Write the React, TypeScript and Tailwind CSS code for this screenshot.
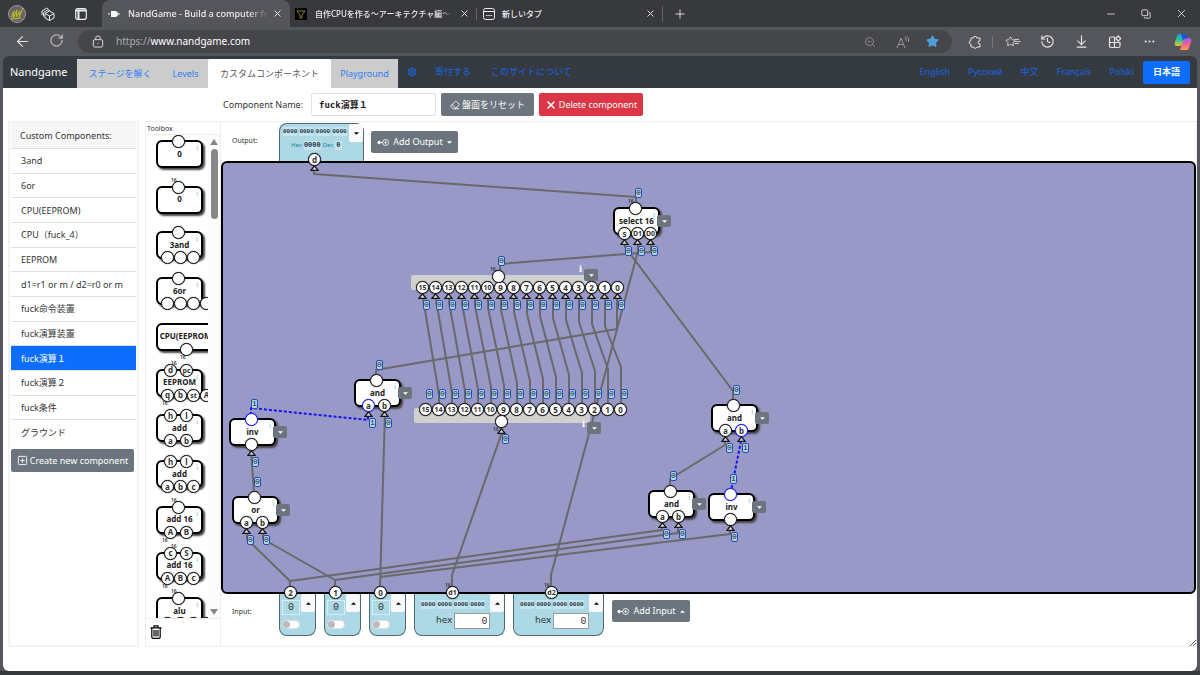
import type { ReactNode } from "react";
import clsx from "clsx";
import {
  ArrowDownToLine,
  ArrowLeft,
  Copy,
  Eraser,
  History,
  ListMinus,
  Minus,
  MoreHorizontal,
  PanelTop,
  Plus,
  RotateCw,
  Settings,
  SquarePlus,
  Star,
  X,
  ZoomOut,
} from "lucide-react";

type Point = [number, number];

type PortDef = { label?: string; live?: boolean };

type PartDef = {
  name: string;
  outputs?: PortDef[];
  inputs: PortDef[];
  wide?: boolean;
  bus?: boolean;
};

type NodeDef = PartDef & { id: string; x: number; y: number };

const blank: PortDef = {};

const components = [
  "3and",
  "6or",
  "CPU(EEPROM)",
  "CPU（fuck_4）",
  "EEPROM",
  "d1=r1 or m / d2=r0 or m",
  "fuck命令装置",
  "fuck演算装置",
  "fuck演算１",
  "fuck演算２",
  "fuck条件",
  "グラウンド",
];

const tools: PartDef[] = [
  { name: "0", inputs: [] },
  { name: "0", inputs: [], bus: true },
  { name: "3and", inputs: [blank, blank, blank] },
  { name: "6or", inputs: [blank, blank, blank, blank] },
  { name: "CPU(EEPROM)", outputs: [], inputs: [blank], wide: true },
  {
    name: "EEPROM",
    outputs: [{ label: "d" }, { label: "pc" }],
    inputs: [{ label: "q" }, { label: "b" }, { label: "st" }, { label: "A" }],
    bus: true,
  },
  { name: "add", outputs: [{ label: "h" }, { label: "l" }], inputs: [{ label: "a" }, { label: "b" }] },
  {
    name: "add",
    outputs: [{ label: "h" }, { label: "l" }],
    inputs: [{ label: "a" }, { label: "b" }, { label: "c" }],
  },
  { name: "add 16", inputs: [{ label: "A" }, { label: "B" }], bus: true },
  {
    name: "add 16",
    outputs: [{ label: "c" }, { label: "S" }],
    inputs: [{ label: "A" }, { label: "B" }, { label: "c" }],
    bus: true,
  },
  { name: "alu", inputs: [blank, blank, blank, blank], bus: true },
];

const nodes: NodeDef[] = [
  { id: "select", name: "select 16", x: 390, y: 44, inputs: [{ label: "s" }, { label: "D1" }, { label: "D0" }], bus: true },
  { id: "and1", name: "and", x: 131, y: 216, inputs: [{ label: "a", live: true }, { label: "b" }] },
  { id: "inv1", name: "inv", x: 6, y: 255, outputs: [{ live: true }], inputs: [blank] },
  { id: "or", name: "or", x: 9, y: 333, inputs: [{ label: "a" }, { label: "b" }] },
  { id: "and2", name: "and", x: 488, y: 241, inputs: [{ label: "a" }, { label: "b", live: true }] },
  { id: "and3", name: "and", x: 425, y: 327, inputs: [{ label: "a" }, { label: "b" }] },
  { id: "inv2", name: "inv", x: 485, y: 330, outputs: [{ live: true }], inputs: [blank] },
];

const wires: Point[][] = [
  [[91, 4], [91, 11], [413, 34], [413, 42]],
  [[402, 78], [402, 84], [510, 228], [510, 238]],
  [[415, 78], [415, 88], [328, 412], [328, 424]],
  [[428, 78], [428, 89], [277, 101], [277, 108]],
  [[394, 134], [394, 166], [153, 207], [153, 213]],
  [[278, 264], [278, 272], [229, 412], [229, 424]],
  [[162, 248], [157, 424]],
  [[28, 288], [31, 330]],
  [[24, 370], [24, 376], [67, 418], [67, 424]],
  [[40, 370], [40, 376], [112, 417], [112, 424]],
  [[67, 418], [439, 367], [439, 360]],
  [[112, 417], [455, 370], [455, 360]],
  [[157, 414], [507, 371], [507, 364]],
  [[502, 276], [502, 282], [447, 316], [447, 324]],
];

// each bit of the lower splitter feeds the next higher bit of the upper one
const shiftWires: Point[][] = Array.from({ length: 15 }, (_, i) => [
  [200 + i * 13, 132],
  [200 + i * 13, 135 + i * 2],
  [216 + i * 13, 232 - i * 2],
  [216 + i * 13, 244],
]);

const liveWires: Point[][] = [
  [[28, 252], [28, 245], [145, 257], [145, 250]],
  [[518, 278], [508, 328]],
];

const toPoints = (wire: Point[]) => wire.map((p) => p.join(",")).join(" ");

function Caret({ up = false }: { up?: boolean }) {
  return (
    <svg viewBox="0 0 6 3" className={clsx("h-[3px] w-[5px] fill-current", up && "rotate-180")}>
      <path d="M0 0h6L3 3z" />
    </svg>
  );
}

function Pin() {
  return (
    <svg viewBox="0 0 14 10" className="h-[9px] w-3 fill-none stroke-current">
      <circle cx="2.500" cy="5" r="1.500" fill="currentColor" />
      <path d="M4 5h3M8.500 5h3M10 3v4" />
      <circle cx="10" cy="5" r="3.500" />
    </svg>
  );
}

function Port({ label, live, x, y }: PortDef & { x: number; y: number }) {
  return (
    <span
      style={{ left: x, top: y }}
      className={clsx(
        "absolute z-10 flex size-[13px] items-center justify-center rounded-full border bg-white leading-none font-bold",
        label && label.length > 1 ? "text-[7px]" : "text-[8px]",
        live ? "border-[#1414f0] shadow-[0_0_1px_#1414f0]" : "border-[#161616] shadow-[0_0_1px_#000]",
      )}
    >
      {label}
    </span>
  );
}

function Arrow({ x, y }: { x: number; y: number }) {
  return (
    <svg viewBox="0 0 9 6" style={{ left: x, top: y }} className="absolute z-10 h-1.5 w-[9px]">
      <path d="M4.500 .8 8 5.300H1z" fill="#ddd" stroke="#161616" strokeWidth="1.300" />
    </svg>
  );
}

function Value({ x, y, children }: { x: number; y: number; children: ReactNode }) {
  return (
    <span
      style={{ left: x, top: y }}
      className="absolute z-10 flex h-[10px] w-[7px] items-center justify-center rounded-xs border border-[#2a48b4] bg-[#add8e6] font-['Liberation_Mono'] text-[8px] leading-none text-[#123]"
    >
      {children}
    </span>
  );
}

function BusWidth({ x, y }: { x: number; y: number }) {
  return (
    <span style={{ left: x, top: y }} className="absolute text-[5px] leading-none font-semibold text-[#333]">
      16
    </span>
  );
}

function NodeMenu({ x, y }: { x: number; y: number }) {
  return (
    <button
      aria-label="Component menu"
      style={{ left: x, top: y }}
      className="absolute z-10 flex h-3 w-[14px] items-center justify-center rounded-xs bg-[#6c757d] text-white"
    >
      <Caret />
    </button>
  );
}

const portX = (count: number, i: number) => {
  if (count === 1) return 16;
  if (count === 2) return 8 + i * 16;
  return 5 + i * 13;
};

function Part({ part, placed = false }: { part: PartDef; placed?: boolean }) {
  const outputs = part.outputs ?? [blank];
  return (
    <div className="relative h-7 w-[47px]">
      <div
        className={clsx(
          "flex h-7 items-center justify-center rounded-md border-2 border-black bg-white pb-px text-[8px] leading-none font-bold whitespace-nowrap text-[#222] shadow-[2px_2px_2px_#444]",
          part.wide ? "w-[62px]" : "w-[47px]",
        )}
      >
        {part.name}
      </div>
      {!part.wide && (
        <span className="absolute top-1 left-10 font-['Liberation_Serif'] text-[8px] leading-none text-[#8ccbe0]">i</span>
      )}
      {outputs.map((port, i) => (
        <Port key={i} {...port} x={portX(outputs.length, i)} y={-5} />
      ))}
      {part.inputs.map((port, i) => (
        <Port key={i} {...port} x={part.wide ? 24 : portX(part.inputs.length, i)} y={20} />
      ))}
      {part.bus && <BusWidth x={15} y={-8} />}
      {part.bus && !placed && part.inputs.length > 0 && <BusWidth x={6} y={32} />}
      {part.wide && <BusWidth x={24} y={32} />}
    </div>
  );
}

function CanvasNode({ node }: { node: NodeDef }) {
  const live = node.outputs?.[0].live;
  return (
    <div style={{ left: node.x, top: node.y }} className="absolute">
      <Part part={node} placed />
      <Value x={22} y={-19}>
        {live ? 1 : 0}
      </Value>
      {node.inputs.map((port, i) => {
        const x = portX(node.inputs.length, i);
        return (
          <div key={i}>
            <Arrow x={x + 2} y={32} />
            <Value x={x + 7} y={39}>
              {port.live ? 1 : 0}
            </Value>
          </div>
        );
      })}
      <NodeMenu x={44} y={8} />
    </div>
  );
}

function Splitter({ x, y, flipped = false }: { x: number; y: number; flipped?: boolean }) {
  const bits = Array.from({ length: 16 }, (_, i) => 15 - i);
  return (
    <div style={{ left: x, top: y }} className="absolute h-[15px] w-44 rounded-xs bg-[#d0d0d0]">
      {bits.map((bit, i) => (
        <div key={bit}>
          <Port label={String(bit)} x={5 + i * 13} y={flipped ? -5 : 6} />
          {!flipped && <Arrow x={7 + i * 13} y={18} />}
          <Value x={12 + i * 13} y={flipped ? -19 : 25}>
            0
          </Value>
        </div>
      ))}
      <Port x={81} y={flipped ? 7 : -5} />
      {flipped && <Arrow x={83} y={20} />}
      <BusWidth x={79} y={flipped ? 19 : -8} />
      <Value x={flipped ? 88 : 87} y={flipped ? 26 : -19}>
        0
      </Value>
      <span
        className={clsx(
          "absolute left-[168px] font-['Liberation_Serif'] text-[11px] leading-none font-bold text-white",
          flipped ? "top-[10px]" : "-top-3",
        )}
      >
        i
      </span>
      <NodeMenu x={173} y={flipped ? 14 : -6} />
    </div>
  );
}

function Canvas() {
  return (
    <div className="relative h-[433px] rounded-md border-2 border-black bg-[#9999c8]">
      <svg className="absolute inset-0 size-full overflow-visible" fill="none" strokeLinejoin="round">
        {[...wires, ...shiftWires].map((wire, i) => (
          <polyline key={i} points={toPoints(wire)} stroke="#696969" strokeWidth="2" />
        ))}
        {liveWires.map((wire, i) => (
          <polyline key={i} points={toPoints(wire)} stroke="#1414f0" strokeWidth="2" strokeDasharray="3 2" />
        ))}
      </svg>
      <Splitter x={188} y={112} />
      <Splitter x={191} y={245} flipped />
      {nodes.map((node) => (
        <CanvasNode key={node.id} node={node} />
      ))}
    </div>
  );
}

function Binary() {
  return (
    <div className="flex gap-0.5 font-['Liberation_Mono'] text-[6px] leading-[9px] font-bold text-[#234]">
      {[0, 1, 2, 3].map((i) => (
        <span key={i} className="bg-[#c5e4ee]">
          0000
        </span>
      ))}
    </div>
  );
}

function OutputRow() {
  return (
    <div className="flex h-[39px] items-end pl-[11px]">
      <span className="w-[47px] self-center text-[7px]">Output:</span>
      <div className="relative h-[38px] w-[85px] rounded-t-lg border border-b-0 border-[#4f6970] bg-[#add8e6] pt-[3px] pl-[3px]">
        <Binary />
        <div className="mt-[5px] flex items-center gap-0.5 pl-2 text-[6px] leading-[9px] text-[#17829c]">
          Hex
          <span className="bg-[#c5e4ee] font-['Liberation_Mono'] text-[7px] font-bold text-[#234]">0000</span>
          Dec
          <span className="bg-[#c5e4ee] px-px font-['Liberation_Mono'] text-[7px] font-bold text-[#234]">0</span>
        </div>
        <button
          aria-label="Output menu"
          className="absolute top-0 right-0 flex h-[18px] w-[14px] items-center justify-center rounded-xs bg-[#f8f9fa] text-black"
        >
          <Caret />
        </button>
        <Port label="d" x={28} y={29} />
        <Arrow x={30} y={41} />
        <BusWidth x={26} y={42} />
      </div>
      <button className="mb-2 ml-[7px] flex h-[22px] w-[87px] items-center justify-center gap-1 rounded-xs bg-[#6c757d] text-[9px] text-white">
        <Pin />
        Add Output
        <Caret />
      </button>
    </div>
  );
}

function MenuUp() {
  return (
    <button
      aria-label="Input menu"
      className="absolute top-0 right-0 flex h-[18px] w-[14px] items-center justify-center rounded-xs bg-[#f8f9fa] text-black"
    >
      <Caret up />
    </button>
  );
}

function InputRow() {
  return (
    <div className="flex items-start pl-[11px]">
      <span className="w-[47px] pt-[13px] text-[7px]">Input:</span>
      <div className="flex gap-2">
        {["2", "1", "0"].map((name) => (
          <div
            key={name}
            className="relative h-[42px] w-[37px] rounded-b-lg border border-t-0 border-[#4f6970] bg-[#add8e6] pt-1.5 pl-0.5"
          >
            <Port label={name} x={4} y={-8} />
            <div className="flex h-[15px] w-[18px] items-center justify-center border border-[#d8eef5] font-['Liberation_Mono'] text-[10px]">
              0
            </div>
            <input
              type="checkbox"
              aria-label={`Input ${name}`}
              className="mt-[5px] block h-[9px] w-[18px] appearance-none rounded-full border border-[#ddd] bg-white before:block before:size-[7px] before:rounded-full before:bg-[#bbb]"
            />
            <MenuUp />
          </div>
        ))}
        {["d1", "d2"].map((name) => (
          <div
            key={name}
            className="relative h-[42px] w-[91px] rounded-b-lg border border-t-0 border-[#4f6970] bg-[#add8e6] pt-1.5 pl-1.5"
          >
            <Port label={name} x={31} y={-8} />
            <BusWidth x={30} y={-11} />
            <Binary />
            <label className="mt-1 flex items-center gap-0.5 pl-[15px] font-['DejaVu_Sans'] text-[9px]">
              hex
              <input
                defaultValue="0"
                className="h-4 w-9 border border-[#999] bg-white pr-0.5 text-right font-['Liberation_Mono'] text-[10px]"
              />
            </label>
            <MenuUp />
          </div>
        ))}
      </div>
      <button className="mt-1.5 ml-2 flex h-[22px] w-[78px] items-center justify-center gap-1 rounded-xs bg-[#6c757d] text-[9px] text-white">
        <Pin />
        Add Input
        <Caret up />
      </button>
    </div>
  );
}

function ComponentList() {
  return (
    <aside className="w-[131px] shrink-0 border-2 border-[#f3f3f3] px-px">
      <h2 className="flex h-[25px] items-center bg-[#f7f7f7] pl-[9px] text-[9px]">Custom Components:</h2>
      <ul className="flex h-[296px] flex-col">
        {components.map((name) => (
          <li key={name} className="flex min-h-0 flex-1 border-t border-[#dfdfdf]">
            <a
              href="#"
              className={clsx(
                "flex flex-1 items-center pl-[10px] text-[9px] leading-none whitespace-nowrap",
                name === "fuck演算１" && "bg-[#0d6efd] text-white",
              )}
            >
              {name}
            </a>
          </li>
        ))}
      </ul>
      <button className="mt-[5px] flex h-[23px] w-[123px] items-center justify-center gap-0.5 rounded-xs bg-[#6c757d] text-[9px] whitespace-nowrap text-white">
        <SquarePlus size={11} />
        Create new component
      </button>
    </aside>
  );
}

function Toolbox() {
  return (
    <section className="flex w-[75px] shrink-0 flex-col border-r border-[#eee]">
      <h2 className="h-[13px] border-b border-[#eee] pl-px text-[7px] leading-[13px]">Toolbox</h2>
      <div className="flex h-[483px] overflow-hidden">
        <div className="w-[62px] overflow-hidden pt-[5px] pl-[10px]">
          <div className="grid h-[503px] grid-rows-11">
            {tools.map((tool, i) => (
              <Part key={i} part={tool} />
            ))}
          </div>
        </div>
        <div className="flex flex-1 flex-col items-center bg-[#fcfcfc] pt-1 pb-[3px] text-[#888]">
          <svg viewBox="0 0 8 6" className="h-1.5 w-2 fill-current">
            <path d="M4 0 8 6H0z" />
          </svg>
          <div className="mt-1 h-[70px] w-[7px] rounded-full bg-[#888]" />
          <svg viewBox="0 0 8 6" className="mt-auto h-1.5 w-2 fill-current">
            <path d="M0 0h8L4 6z" />
          </svg>
        </div>
      </div>
      <div className="flex h-[26px] items-center border-t border-[#eee] pl-1">
        <button aria-label="Trash">
          <svg viewBox="0 0 12 14" className="h-3.5 w-3 fill-none stroke-black" strokeWidth="1.200">
            <path d="M.5 2.800h11M4 2.500V.8h4v1.700M1.800 3v9q0 1.300 1.200 1.300h6q1.200 0 1.200-1.300V3M4 5v6.500M6 5v6.500M8 5v6.500" />
          </svg>
        </button>
      </div>
    </section>
  );
}

function BrowserTabs() {
  return (
    <div className="flex h-[27px] items-center bg-[#38393c] text-[#eee]">
      <div className="flex w-[102px] items-center pl-2">
        <svg viewBox="0 0 18 18" className="size-[18px]">
          <circle cx="9" cy="9" r="8.500" fill="#666" stroke="#999" />
          <path d="M3 12 6 6l-1 7 4-8-1 7 4-6-1 6 4-9M3 14l10-1" fill="none" stroke="#c9bd22" />
        </svg>
        <svg viewBox="0 0 14 14" className="ml-[15px] size-3.5 fill-none stroke-current" strokeLinejoin="round">
          <path d="M4 6.500 8.500 4 13 6.500V11l-4.500 2.500L4 11zM4 6.500 8.500 9 13 6.500M8.500 9v4.500M2.500 9.500V5.500L7 2.800l2 1M1 8V4L5.500 1.200l2 1" />
        </svg>
        <svg viewBox="0 0 12 12" className="ml-5 size-3 fill-none stroke-current">
          <rect x=".7" y=".7" width="10.600" height="10.600" rx="2" strokeWidth="1.200" />
          <path d="M1 2.500h10M3.500 3v8" strokeWidth="2" />
        </svg>
      </div>
      <div className="flex h-full w-[188px] items-center rounded-t-lg bg-[#55565b] pl-[6px]">
        <svg viewBox="0 0 12 8" className="h-2 w-3 fill-white">
          <path d="M0 3.500h2v1H0zM3 1h4a3 3 0 0 1 0 6H3zM9 3.500h3v1H9z" />
        </svg>
        <span className="ml-2 w-[141px] mask-r-from-85% text-[9px] font-medium whitespace-nowrap">
          NandGame - Build a computer fro
        </span>
        <button aria-label="Close tab" className="ml-[3px]">
          <X size={11} />
        </button>
      </div>
      <div className="flex w-[186px] items-center pl-[5px]">
        <svg viewBox="0 0 12 12" className="size-3">
          <path d="M0 0h12v12H0z" />
          <path d="M2 3h8L7 7v3H5V7z" fill="none" stroke="#93801c" />
        </svg>
        <span className="ml-2 w-[138px] mask-r-from-90% text-[8px] font-medium whitespace-nowrap">
          自作CPUを作る～アーキテクチャ編～
        </span>
        <button aria-label="Close tab" className="ml-1.5">
          <X size={11} />
        </button>
      </div>
      <div className="flex w-[186px] items-center border-l border-[#666] pl-1.5">
        <svg viewBox="0 0 12 12" className="size-3 fill-none stroke-current">
          <rect x=".5" y=".5" width="11" height="11" rx="2" />
          <path d="M1 3.500h10" />
          <path d="M3 7.500h6" strokeDasharray="1.500 .8" />
        </svg>
        <span className="ml-[7px] flex-1 text-[8px] font-medium">新しいタブ</span>
        <button aria-label="Close tab" className="mr-[6px]">
          <X size={11} />
        </button>
      </div>
      <button aria-label="New tab" className="flex h-4 items-center border-l border-[#666] pl-[10px]">
        <Plus size={14} strokeWidth={1.500} />
      </button>
      <div className="ml-auto flex items-center gap-6 pr-3">
        <Minus size={12} strokeWidth={1.500} />
        <Copy size={10} className="-scale-x-100 rotate-90" />
        <X size={13} strokeWidth={1.500} />
      </div>
    </div>
  );
}

function AddressBar() {
  return (
    <div className="flex h-[29px] items-center bg-[#55565b] text-[#e4e4e4] [&_button]:flex [&_button]:w-[34px] [&_button]:justify-center">
      <div className="flex w-[78px] pl-[5px]">
        <button aria-label="Back">
          <ArrowLeft size={17} strokeWidth={1.500} />
        </button>
        <button aria-label="Reload">
          <RotateCw size={15} strokeWidth={1.500} />
        </button>
      </div>
      <div className="flex h-[23px] flex-1 items-center rounded-full bg-[#45464a] pl-3.5">
        <svg viewBox="0 0 12 14" className="h-[13px] w-3 fill-none stroke-current">
          <rect x="1" y="5" width="10" height="8" rx="1.500" />
          <path d="M3.500 5V3.500a2.500 2.500 0 0 1 5 0V5M6 8.500v1" />
        </svg>
        <span className="ml-3 flex-1 text-[10px]">
          <span className="text-[#aaa]">https://</span>
          <span className="text-white">www.nandgame.com</span>
        </span>
        <ZoomOut size={12} className="mr-5 text-[#8c8c8c]" />
        <svg viewBox="0 0 14 14" className="mr-4 size-3.5 fill-none stroke-[#999]">
          <path d="m1 13 4-10 4 10M2.500 9.500h5M8.500 2q2 1 1.500 4M10.500 1q3 2 2 6" />
        </svg>
        <Star size={13} className="mr-[13px] fill-[#4f9fdc] text-[#4f9fdc]" />
      </div>
      <div className="flex items-center pl-1.5">
        <button aria-label="Extensions">
          <svg viewBox="0 0 14 14" className="size-[14px] fill-none stroke-current" strokeLinejoin="round">
            <path d="M3 3h2.300a1.700 1.700 0 0 1 3.400 0H12v2.800q-2-.3-2 1.500t2 1.500V12H9q-.3 1.300-1.800 1.300T5.300 12H3V9.200a1.800 1.800 0 0 1 0-3.600z" />
          </svg>
        </button>
        <span className="mr-[3px] h-3 w-px bg-[#777]" />
        <button aria-label="Favorites" className="items-center">
          <Star size={11} strokeWidth={1.800} />
          <ListMinus size={7} strokeWidth={3} className="-ml-0.5" />
        </button>
        <button aria-label="History">
          <History size={15} strokeWidth={1.800} />
        </button>
        <button aria-label="Downloads">
          <ArrowDownToLine size={15} strokeWidth={1.800} />
        </button>
        <button aria-label="Apps">
          <svg viewBox="0 0 14 14" className="size-[14px] fill-none stroke-current" strokeWidth="1.200" strokeLinejoin="round">
            <path d="M6.500 2H3q-1.500 0-1.500 1.500V11q0 1.500 1.500 1.500h7.500q1.500 0 1.500-1.500V7.500H1.500M6.500 2v10.500M10.200 1l2.500 2.500L10.200 6 7.700 3.500z" />
          </svg>
        </button>
        <button aria-label="More">
          <MoreHorizontal size={13} />
        </button>
        <button aria-label="Copilot">
          <svg viewBox="0 0 18 16" className="h-4 w-[18px]">
            <defs>
              <linearGradient id="cool" x1="0" y1="0" x2="0" y2="1">
                <stop stopColor="#1a9fe8" />
                <stop offset=".5" stopColor="#2fc08e" />
                <stop offset="1" stopColor="#f0c329" />
              </linearGradient>
              <linearGradient id="warm" x1="0" y1="0" x2="0" y2="1">
                <stop stopColor="#a05df0" />
                <stop offset=".5" stopColor="#ee5f9c" />
                <stop offset="1" stopColor="#ff9d4a" />
              </linearGradient>
            </defs>
            <path d="M5 0h7l-3 9q-1 3-4 3H3Q0 12 .8 8L3 2Q3.500 0 5 0z" fill="url(#cool)" />
            <path d="M13 16H6l3-9q1-3 4-3h2q3 0 2.200 4L15 14q-.5 2-2 2z" fill="url(#warm)" />
            <path d="M7 0h4q2 0 2.500 4Q10 4 9 7z" fill="#1c55d8" />
          </svg>
        </button>
      </div>
    </div>
  );
}

function NavBar() {
  return (
    <nav className="flex h-8 items-center rounded-t-md bg-[#343a40] pr-[7px] pl-[7px] text-[9px] whitespace-nowrap text-[#1b65e0]">
      <a href="#" className="w-[67px] text-[11px] text-white">
        Nandgame
      </a>
      <div className="flex h-[29px] self-end bg-[#ccc] text-[#2f7df6] [&>a]:flex [&>a]:items-center [&>a]:justify-center">
        <a href="#" className="w-[86px] rounded-t-xs">
          ステージを解く
        </a>
        <a href="#" className="w-[45px]">
          Levels
        </a>
        <a href="#" className="w-[123px] rounded-t-xs bg-white text-[#555]">
          カスタムコンポーネント
        </a>
        <a href="#" className="w-[67px]">
          Playground
        </a>
      </div>
      <a href="#" aria-label="Settings" className="ml-[9px]">
        <Settings size={10} strokeWidth={2.500} />
      </a>
      <a href="#" className="ml-[18px]">
        寄付する
      </a>
      <a href="#" className="ml-5">
        このサイトについて
      </a>
      <div className="ml-auto flex items-center gap-[18px]">
        <a href="#">English</a>
        <a href="#">Русский</a>
        <a href="#">中文</a>
        <a href="#">Français</a>
        <a href="#">Polski</a>
      </div>
      <button className="ml-[9px] h-[23px] w-[47px] rounded-xs bg-[#0d6efd] font-bold text-white">日本語</button>
    </nav>
  );
}

export default function App() {
  return (
    <div className="flex min-h-screen flex-col bg-[#46464b] font-['Noto_Sans','Noto_Sans_CJK_JP',sans-serif] text-[#333]">
      <BrowserTabs />
      <AddressBar />
      <div className="flex flex-1 flex-col bg-[#55565b] px-[3px]">
        <NavBar />
        <main className="flex-1 rounded-b-md bg-white pl-px">
          <div className="flex items-center gap-[5px] pt-[5px] pl-[219px] text-[9px]">
            <label htmlFor="component-name" className="w-[83px] whitespace-nowrap">
              Component Name:
            </label>
            <input
              id="component-name"
              defaultValue="fuck演算１"
              className="h-[23px] w-[125px] rounded-xs border border-[#dee2e6] px-[7px] font-['DejaVu_Sans_Mono','Noto_Sans_CJK_JP',monospace] text-[9px] font-bold text-[#222]"
            />
            <button className="flex h-[23px] w-[93px] items-center justify-center gap-0.5 rounded-xs bg-[#6c757d] text-white">
              <Eraser size={10} />
              盤面をリセット
            </button>
            <button className="flex h-[23px] w-[104px] items-center justify-center gap-0.5 rounded-xs bg-[#dc3545] whitespace-nowrap text-white">
              <X size={12} strokeWidth={3} />
              Delete component
            </button>
          </div>
          <div className="flex gap-1.5 pt-[5px] pl-1">
            <ComponentList />
            <div className="flex min-w-0 flex-1 border border-[#eee]">
              <Toolbox />
              <div className="min-w-0 flex-1">
                <OutputRow />
                <Canvas />
                <InputRow />
                <div className="flex justify-end pt-1">
                  <svg viewBox="0 0 6 6" className="size-1.5 stroke-[#555]">
                    <path d="M0 6 6 0M3 6l3-3" />
                  </svg>
                </div>
              </div>
            </div>
          </div>
        </main>
      </div>
      <div className="h-1 bg-[#38393c]" />
    </div>
  );
}
